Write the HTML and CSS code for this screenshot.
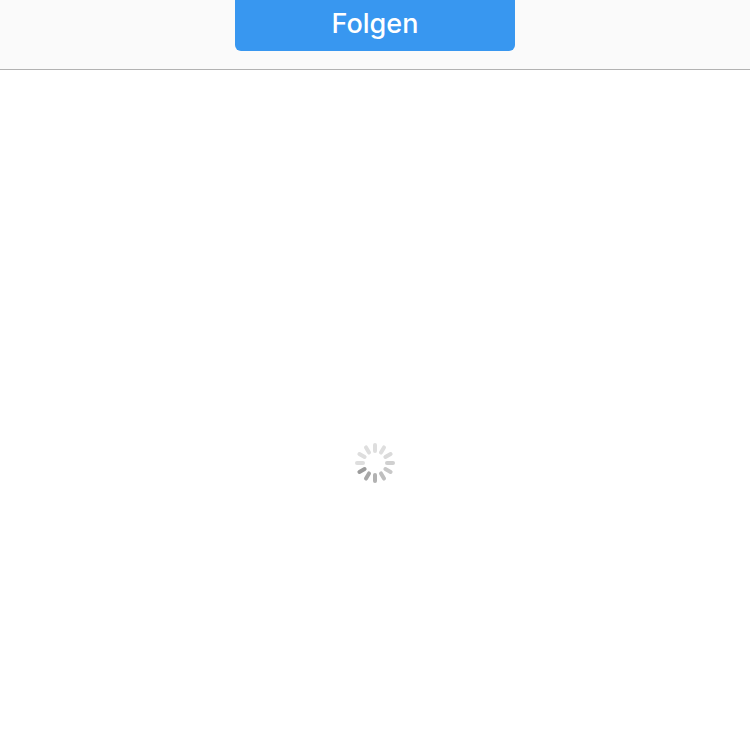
FILE: index.html
```
<!DOCTYPE html>
<html lang="de">
<head>
<meta charset="utf-8">
<meta name="viewport" content="width=device-width, initial-scale=1">
<title>Profil</title>
<link rel="stylesheet" href="styles.css">
</head>
<body>
<header class="bar">
  <button class="follow" type="button">Folgen</button>
</header>
<main class="content">
  <svg class="spinner" viewBox="-20 -20 40 40" role="img" aria-label="Wird geladen">
    <g stroke-width="4" stroke-linecap="round">
      <path d="M0-18V-12" stroke="#dedede"/>
      <path d="M0-18V-12" stroke="#dedede" transform="rotate(30)"/>
      <path d="M0-18V-12" stroke="#dadada" transform="rotate(60)"/>
      <path d="M0-18V-12" stroke="#d0d0d0" transform="rotate(90)"/>
      <path d="M0-18V-12" stroke="#c8c8c8" transform="rotate(120)"/>
      <path d="M0-18V-12" stroke="#bebebe" transform="rotate(150)"/>
      <path d="M0-18V-12" stroke="#b2b2b2" transform="rotate(180)"/>
      <path d="M0-18V-12" stroke="#a8a8a8" transform="rotate(210)"/>
      <path d="M0-18V-12" stroke="#9c9c9c" transform="rotate(240)"/>
      <path d="M0-18V-12" stroke="#dedede" transform="rotate(270)"/>
      <path d="M0-18V-12" stroke="#dedede" transform="rotate(300)"/>
      <path d="M0-18V-12" stroke="#dedede" transform="rotate(330)"/>
    </g>
  </svg>
</main>
</body>
</html>
```
FILE: styles.css
```
* {
  box-sizing: border-box;
}

body {
  margin: 0;
  min-height: 100vh;
  display: flex;
  flex-direction: column;
  background: #fff;
  font-family: Inter, "Liberation Sans", sans-serif;
}

.bar {
  display: flex;
  justify-content: center;
  padding-bottom: 18px;
  background: #fafafa;
  border-bottom: 1px solid #b2b2b2;
}

.follow {
  width: 280px;
  max-width: 100%;
  padding: 7px 16px 10px;
  border: 0;
  border-radius: 0 0 6px 6px;
  background: #3897f0;
  color: #fff;
  font: inherit;
  font-size: 27px;
  font-weight: 500;
  line-height: 34px;
  cursor: pointer;
}

.content {
  flex: 1;
  display: flex;
  align-items: center;
  justify-content: center;
  padding-top: 106px;
}

.spinner {
  width: 40px;
  height: 40px;
}
```
